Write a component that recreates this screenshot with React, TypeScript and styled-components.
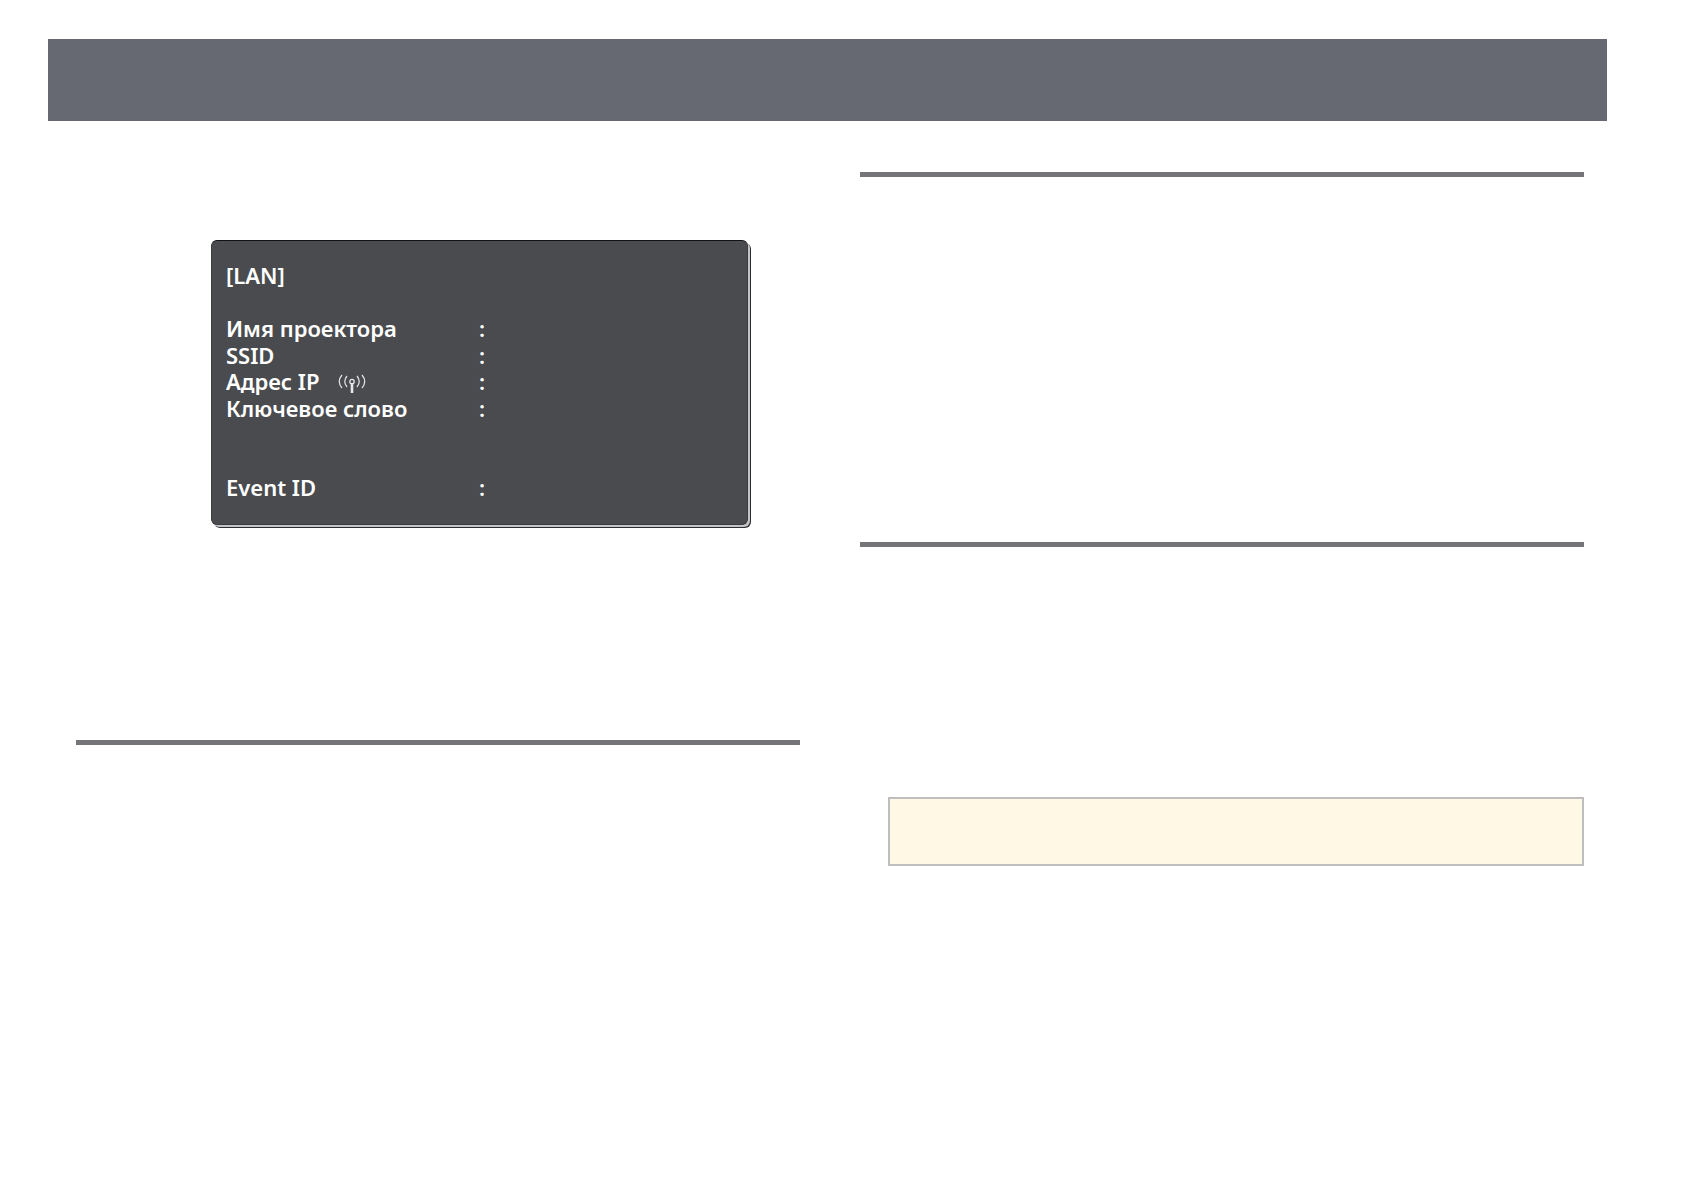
import React from "react";
import styled, { createGlobalStyle } from "styled-components";

const GlobalStyle = createGlobalStyle`
  *, *::before, *::after { box-sizing: border-box; }
  body {
    margin: 0;
    background: #ffffff;
    font-family: "Noto Sans", "Open Sans", sans-serif;
  }
`;

const Page = styled.div`
  padding-top: 39px;
`;

const HeaderBar = styled.header`
  height: 82px;
  margin: 0 77px 0 48px;
  background: #666972;
`;

const Columns = styled.main`
  display: grid;
  grid-template-columns: 1fr 1fr;
  column-gap: 60px;
  padding: 51px 100px 48px 76px;
`;

const Column = styled.section`
  display: flex;
  flex-direction: column;
`;

const Rule = styled.hr<{ $space: number }>`
  width: 100%;
  height: 5px;
  margin: 0 0 ${(p) => p.$space}px;
  border: 0;
  background: #757478;
`;

const ProjectorScreen = styled.div`
  margin: 68px 52px 215px 135px;
  padding: 21px 16px 24px 14px;
  border: 1px solid #3c3d41;
  border-top-color: #111215;
  border-radius: 6px;
  background: #4a4b4f;
  box-shadow: 1px 1px 0 #c4c4c6, 2px 2px 0 #c4c4c6, 3px 3px 0 #2c2d30;
  color: #ffffff;
  font-size: 22px;
  font-weight: 600;
  line-height: 26px;
`;

const ScreenTitle = styled.h2`
  margin: 0 0 27px;
  font: inherit;
`;

const InfoTable = styled.table`
  width: 100%;
  border-collapse: collapse;
  table-layout: fixed;
`;

const InfoRow = styled.tr<{ $height: number }>`
  height: ${(p) => p.$height}px;
  vertical-align: bottom;
`;

const Label = styled.th`
  width: 253px;
  padding: 0;
  font: inherit;
  text-align: left;
  white-space: nowrap;
`;

const Value = styled.td`
  padding: 0;
`;

const Wireless = styled.svg`
  width: 28px;
  height: 20px;
  margin-left: 18px;
  vertical-align: -4px;
`;

const NoteBox = styled.aside`
  height: 69px;
  margin-left: 28px;
  border: 2px solid #bebebe;
  background: #fff8e5;
`;

function WirelessIcon() {
  return (
    <Wireless viewBox="0 0 28 20" fill="none" stroke="#e6e6e8" aria-hidden="true">
      <circle cx="14" cy="7.5" r="2.2" strokeWidth="1.3" />
      <path d="M14 10v9" strokeWidth="2.6" />
      <path
        d="M9 2Q4.5 7.500 9 13M4 1Q-1.5 7.500 4 14M19 2Q23.500 7.500 19 13M24 1Q29.500 7.500 24 14"
        strokeWidth="1.2"
      />
    </Wireless>
  );
}

const rows = [
  { label: "Имя проектора", height: 26 },
  { label: "SSID", height: 27 },
  { label: "Адрес IP", height: 26, wireless: true },
  { label: "Ключевое слово", height: 27 },
  { label: "Event ID", height: 79 },
];

export default function App() {
  return (
    <Page>
      <GlobalStyle />
      <HeaderBar />
      <Columns>
        <Column>
          <ProjectorScreen>
            <ScreenTitle>[LAN]</ScreenTitle>
            <InfoTable>
              <tbody>
                {rows.map((row) => (
                  <InfoRow key={row.label} $height={row.height}>
                    <Label scope="row">
                      {row.label}
                      {row.wireless && <WirelessIcon />}
                    </Label>
                    <Value>:</Value>
                  </InfoRow>
                ))}
              </tbody>
            </InfoTable>
          </ProjectorScreen>
          <Rule $space={0} />
        </Column>
        <Column>
          <Rule $space={365} />
          <Rule $space={250} />
          <NoteBox />
        </Column>
      </Columns>
    </Page>
  );
}
